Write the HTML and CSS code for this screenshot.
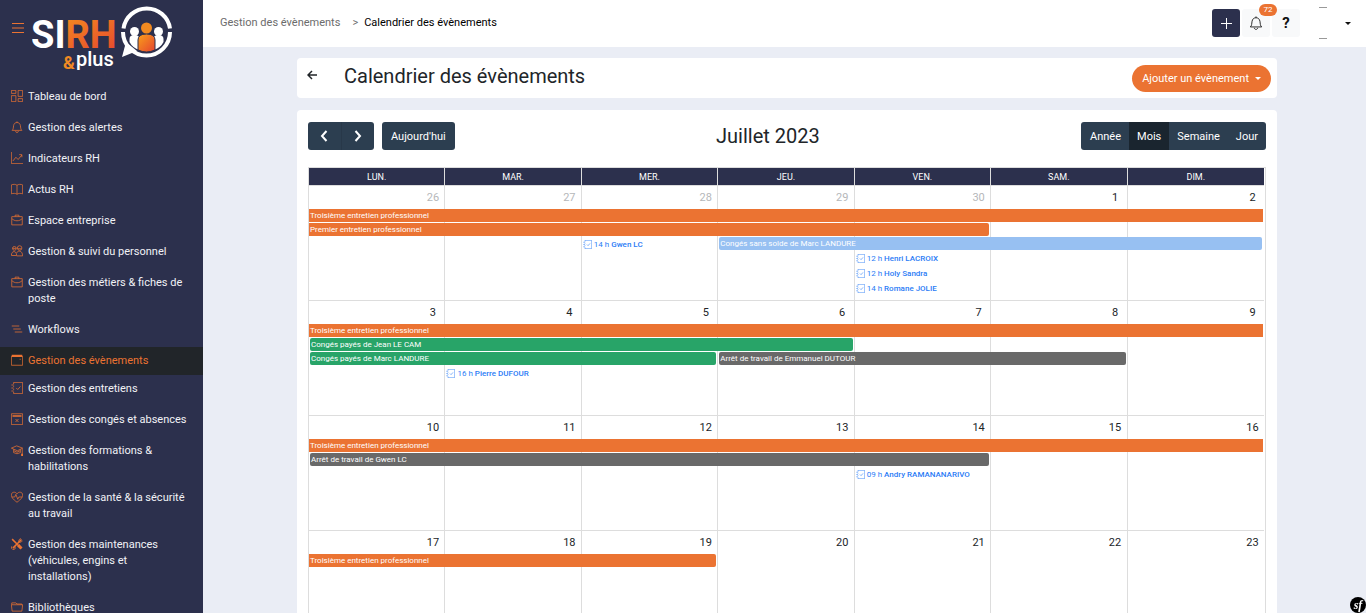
FILE: index.html
```html
<!DOCTYPE html>
<html lang="fr">
<head>
<meta charset="utf-8">
<title>Calendrier des évènements</title>
<link rel="stylesheet" href="styles.css">
</head>
<body>
<svg class="sprite" aria-hidden="true">
  <symbol id="i-entretien" viewBox="0 0 16 16"><path d="M3.500 3V.5h12v15h-12V13M3.500 5v1.500M3.500 9v1.500M.5 4h3M.5 8h3M.5 12h3M7 8l2 2 3.500-4"/></symbol>
  <symbol id="i-brief" viewBox="0 0 16 16"><path d="M5.500 3.500v-2h5v2M1 3.500h14v11H1zM1 6c2 2 4 3 7 3s5-1 7-3"/></symbol>
  <symbol id="i-bell" viewBox="0 0 16 16"><path d="M1.500 12.500h13C12.700 11 13 9 12.500 6 12 3.500 10.500 2 8 2S4 3.500 3.500 6c-.5 3-.2 5-2 6.500zM8 .5V2M6 13.500c.3 2.400 3.700 2.400 4 0"/></symbol>
</svg>
<div class="app">
  <aside class="sidebar">
    <div class="brand">
      <button class="burger" type="button" aria-label="Menu"><svg viewBox="0 0 12 10"><path d="M0 .5h12M0 5h12M0 9.500h12"/></svg></button>
      <svg class="logo" viewBox="0 0 144 72" role="img" aria-label="SIRH &amp; plus">
        <defs><linearGradient id="flame" x1="0" y1="0" x2="1" y2="1"><stop offset="0" stop-color="#f9a01b"/><stop offset="1" stop-color="#e5432f"/></linearGradient></defs>
        <text x="-1" y="44" class="logo-main">SI<tspan fill="url(#flame)">RH</tspan></text>
        <text x="31" y="65" class="logo-amp">&amp;</text>
        <text x="44" y="62" class="logo-sub">plus</text>
        <path d="M91.500 22.500a23.500 23.500 0 0 1 46.500 0M91 26a23.500 23.500 0 0 0 47 0" transform="translate(0 2)" fill="none" stroke="#fff" stroke-width="4"/>
        <path d="M94 38l-4 15 15-6z" fill="#fff"/>
        <circle cx="102.500" cy="27.500" r="4.500" fill="#fff"/><circle cx="126.500" cy="27.500" r="4.500" fill="#fff"/>
        <path d="M97.500 38V35q0-4 5-4t5 4v11q-7-2-10-8zM131.500 38V35q0-4-5-4t-5 4v11q7-2 10-8z" fill="#fff"/>
        <path d="M106 46V36q0-6 8.500-6t8.500 6v10q-8.500 4-17 0z" fill="url(#flame)" stroke="#2c304d"/>
        <circle cx="114.500" cy="24" r="5.500" fill="#f28a20"/>
      </svg>
    </div>
    <nav class="menu">
      <a href="#"><svg viewBox="0 0 16 16"><path d="M.5.5h6v4h-6zM.5 7.500h6v8h-6zM9.500.5h6v8h-6zM9.500 11.500h6v4h-6z"/></svg><span>Tableau de bord</span></a>
      <a href="#"><svg><use href="#i-bell"/></svg><span>Gestion des alertes</span></a>
      <a href="#"><svg viewBox="0 0 16 16"><path d="M.5 0v15.500H16M2.500 12l4-5 3 3 5-6M11 3.500h3.500V7"/></svg><span>Indicateurs RH</span></a>
      <a href="#"><svg viewBox="0 0 16 16"><path d="M8 3C6 1.500 3 1.500.5 2.500v12C3 13.500 6 13.500 8 15c2-1.500 5-1.500 7.500-.5v-12C13 1.500 10 1.500 8 3zM8 3v12"/></svg><span>Actus RH</span></a>
      <a href="#"><svg><use href="#i-brief"/></svg><span>Espace entreprise</span></a>
      <a href="#"><svg viewBox="0 0 16 16"><circle cx="4.500" cy="4.500" r="2.500"/><circle cx="11.500" cy="4" r="3"/><path d="M.5 14c0-7 7-7 7 0zM7.500 14.500h8c0-7-6-8-8-4M2 4.500h5M9 5h5"/></svg><span>Gestion &amp; suivi du personnel</span></a>
      <a href="#"><svg><use href="#i-brief"/></svg><span>Gestion des métiers &amp; fiches de poste</span></a>
      <a href="#"><svg viewBox="0 0 16 16"><path d="M1 4h10M3 8h10M5 12h10"/></svg><span>Workflows</span></a>
      <a href="#" class="active" aria-current="page"><svg viewBox="0 0 16 16"><path d="M.5 3h15v12H.5zM11.500 7h1.500"/><path d="M1 2.500h14" stroke-width="3"/></svg><span>Gestion des évènements</span></a>
      <a href="#"><svg><use href="#i-entretien"/></svg><span>Gestion des entretiens</span></a>
      <a href="#"><svg viewBox="0 0 16 16"><path d="M.5 1h15v14.500H.5zM6 8l4 4M10 8l-4 4"/><path d="M2 4h12" stroke-width="2"/></svg><span>Gestion des congés et absences</span></a>
      <a href="#"><svg viewBox="0 0 16 16"><path d="M.5 5.500l7-3 8 3-7 3.500zM3.500 7v4.500q4.500 3 9 0V7M15 6v8M4 9l4 2 4-2"/><path d="M13.500 14.500h2.500" stroke-width="3"/></svg><span>Gestion des formations &amp; habilitations</span></a>
      <a href="#"><svg viewBox="0 0 16 16"><path d="M8 15C2 10.500.5 8 .5 5.200.5 1 6 .5 8 3.700 10 .5 15.500 1 15.500 5.200 15.500 8 14 10.500 8 15zM1 8h4l1.500-3.500L9 11l1.500-3H15"/></svg><span>Gestion de la santé &amp; la sécurité au travail</span></a>
      <a href="#"><svg viewBox="0 0 16 16"><path d="M1.500 1.500L9 9l4.500 5M14 2L2.500 13.500" stroke-width="2"/><path d="M9.500 9.500l4.500 4.500" stroke-width="4"/><path d="M13 .5l-2.500 2v3h3l2-2M1 11l-.5 2.500 2 2 3-1v-3"/></svg><span>Gestion des maintenances (véhicules, engins et installations)</span></a>
      <a href="#"><svg viewBox="0 0 16 16"><path d="M1.500 13.500L.5 5h15l-1 8.500zM1 5V2.500h5.500L8 4h6.500v1"/></svg><span>Bibliothèques</span></a>
    </nav>
  </aside>

  <div class="content">
    <header class="topbar">
      <nav class="crumbs" aria-label="Fil d'Ariane"><a href="#">Gestion des évènements</a><span class="sep">&gt;</span><span class="here">Calendrier des évènements</span></nav>
      <div class="tools">
        <button class="tool tool-add" type="button" aria-label="Ajouter"><svg viewBox="0 0 11 11"><path d="M5.500 0v11M0 5.500h11"/></svg></button>
        <button class="tool tool-bell" type="button" aria-label="Notifications"><svg class="bell"><use href="#i-bell"/></svg><span class="badge">72</span></button>
        <button class="tool tool-help" type="button">?</button>
        <button class="account" type="button" aria-label="Compte"><svg class="avatar" viewBox="0 0 32 32"><path d="M12 .5h8M12 31.500h8"/></svg><span class="caret"></span></button>
      </div>
    </header>

    <main class="page">
      <section class="card heading">
        <a class="back" href="#" aria-label="Retour"><svg viewBox="0 0 10 10"><path d="M10 5H1M5 1L1 5l4 4"/></svg></a>
        <h1>Calendrier des évènements</h1>
        <button class="add-event" type="button">Ajouter un évènement<span class="caret"></span></button>
      </section>

      <section class="card calendar">
        <div class="toolbar">
          <div class="left">
            <div class="group arrows">
              <button type="button" aria-label="Mois précédent"><svg viewBox="0 0 8 12"><path d="M6.500 1L2 6l4.500 5"/></svg></button>
              <button type="button" aria-label="Mois suivant"><svg viewBox="0 0 8 12"><path d="M1.500 1L6 6l-4.500 5"/></svg></button>
            </div>
            <div class="group"><button type="button">Aujourd'hui</button></div>
          </div>
          <h2>Juillet 2023</h2>
          <div class="group views">
            <button type="button">Année</button><button type="button" class="on" aria-pressed="true">Mois</button><button type="button">Semaine</button><button type="button">Jour</button>
          </div>
        </div>

        <div class="frame">
        <table class="month">
          <thead><tr><th>LUN.</th><th>MAR.</th><th>MER.</th><th>JEU.</th><th>VEN.</th><th>SAM.</th><th>DIM.</th></tr></thead>
          <tbody>
            <tr>
              <td class="out"><div class="num">26</div>
                <div class="bar orange span-7">Troisième entretien professionnel</div>
                <div class="bar orange span-5 ends">Premier entretien professionnel</div></td>
              <td class="out"><div class="num">27</div></td>
              <td class="out"><div class="num">28</div><div class="skip-2"><a class="timed" href="#"><svg><use href="#i-entretien"/></svg>14 h <b>Gwen LC</b></a></div></td>
              <td class="out"><div class="num">29</div><div class="skip-2"><div class="bar blue span-4 starts ends">Congés sans solde de Marc LANDURE</div></div></td>
              <td class="out"><div class="num">30</div><div class="skip-3">
                <a class="timed" href="#"><svg><use href="#i-entretien"/></svg>12 h <b>Henri LACROIX</b></a>
                <a class="timed" href="#"><svg><use href="#i-entretien"/></svg>12 h <b>Holy Sandra</b></a>
                <a class="timed" href="#"><svg><use href="#i-entretien"/></svg>14 h <b>Romane JOLIE</b></a></div></td>
              <td><div class="num">1</div></td>
              <td><div class="num">2</div></td>
            </tr>
            <tr>
              <td><div class="num">3</div>
                <div class="bar orange span-7">Troisième entretien professionnel</div>
                <div class="bar green span-4 starts ends">Congés payés de Jean LE CAM</div>
                <div class="bar green span-3 starts ends">Congés payés de Marc LANDURE</div></td>
              <td><div class="num">4</div><div class="skip-3"><a class="timed" href="#"><svg><use href="#i-entretien"/></svg>16 h <b>Pierre DUFOUR</b></a></div></td>
              <td><div class="num">5</div></td>
              <td><div class="num">6</div><div class="skip-2"><div class="bar grey span-3 starts ends">Arrêt de travail de Emmanuel DUTOUR</div></div></td>
              <td><div class="num">7</div></td>
              <td><div class="num">8</div></td>
              <td><div class="num">9</div></td>
            </tr>
            <tr>
              <td><div class="num">10</div>
                <div class="bar orange span-7">Troisième entretien professionnel</div>
                <div class="bar grey span-5 starts ends">Arrêt de travail de Gwen LC</div></td>
              <td><div class="num">11</div></td>
              <td><div class="num">12</div></td>
              <td><div class="num">13</div></td>
              <td><div class="num">14</div><div class="skip-2"><a class="timed" href="#"><svg><use href="#i-entretien"/></svg>09 h <b>Andry RAMANANARIVO</b></a></div></td>
              <td><div class="num">15</div></td>
              <td><div class="num">16</div></td>
            </tr>
            <tr>
              <td><div class="num">17</div><div class="bar orange span-3 ends">Troisième entretien professionnel</div></td>
              <td><div class="num">18</div></td>
              <td><div class="num">19</div></td>
              <td><div class="num">20</div></td>
              <td><div class="num">21</div></td>
              <td><div class="num">22</div></td>
              <td><div class="num">23</div></td>
            </tr>
          </tbody>
        </table>
        </div>
      </section>
    </main>
  </div>
</div>
<button class="sf" type="button" aria-label="Symfony">sf</button>
</body>
</html>
```

FILE: styles.css
```css
* { box-sizing: border-box; }
body { margin: 0; font-family: Roboto, "Liberation Sans", sans-serif; font-size: 11px; color: #212529; background: #eaedf5; }
button { font: inherit; border: 0; padding: 0; cursor: pointer; }
a { text-decoration: none; color: inherit; }
svg { display: block; fill: none; stroke: currentColor; }
.sprite { width: 0; height: 0; float: left; }
.app { display: grid; grid-template-columns: 203px minmax(0, 1fr); height: 100vh; overflow: hidden; }

.sidebar { background: #2c304d; color: #f1f2f6; overflow: hidden; }
.brand { display: flex; height: 83px; padding: 4px 0 0 12px; gap: 8px; }
.burger { width: 12px; height: 48px; background: none; color: #eb7332; }
.burger svg { width: 12px; height: 10px; }
.logo { width: 144px; height: 72px; stroke: none; }
.logo-main { font: 700 38px Roboto, sans-serif; fill: #fff; }
.logo-amp { font: 700 18px Roboto, sans-serif; fill: #f08a24; }
.logo-sub { font: 500 20px Roboto, sans-serif; fill: #fff; }

.menu a { display: flex; gap: 5px; padding: 6px 12px 6px 11px; line-height: 16px; }
.menu a + a { margin-top: 3px; }
.menu .active + a { margin-top: 0; }
.menu svg { flex: none; width: 12px; height: 12px; margin-top: 1px; color: #eb7332; }
.menu .active { background: #212529; color: #eb7332; }

.topbar { display: flex; justify-content: space-between; height: 47px; padding: 0 15px 0 17px; background: #fff; }
.crumbs { display: flex; align-items: center; padding-bottom: 3px; color: #6c6c6c; }
.sep { margin: 0 6px 0 12px; }
.here { color: #000; }
.tools { display: flex; gap: 2px; padding-top: 9px; }
.tool { display: grid; place-items: center; width: 28px; height: 28px; border-radius: 3px; background: #f8f9fa; color: #111; }
.tool-add { background: #2c304d; color: #fff; }
.tool-add svg { width: 11px; height: 11px; }
.tool-bell { position: relative; z-index: 1; }
.bell { width: 14px; height: 14px; }
.tool-help { font-size: 15px; font-weight: 700; }
.badge { position: absolute; top: -5px; right: -7px; width: 18px; border-radius: 6px; background: #eb7332; color: #fff; font-size: 8px; line-height: 12px; text-align: center; }
.account { display: flex; align-items: center; gap: 6px; height: 32px; margin: -2px 0 0 5px; background: none; color: #111; }
.avatar { width: 32px; height: 32px; stroke: #999; }
.caret { border: 3px solid transparent; border-top-color: currentColor; border-bottom: 0; }

.page { padding: 11px 89px 0 94px; }
.card { background: #fff; border-radius: 4px; }
.heading { display: flex; align-items: center; height: 40px; padding: 0 6px 0 10px; margin-bottom: 12px; }
.back svg { width: 10px; height: 10px; margin-bottom: 6px; stroke-width: 1.5; }
h1, h2 { margin: 0; font-size: 20px; font-weight: 400; line-height: 24px; }
h1 { flex: 1; margin: 0 0 4px 27px; }
.add-event { display: flex; align-items: center; gap: 6px; height: 27px; padding: 0 10px; border-radius: 14px; background: #eb7332; color: #fff; }

.calendar { padding: 11px; }
.toolbar { display: flex; justify-content: space-between; align-items: center; height: 29px; margin-bottom: 17px; }
.left { display: flex; gap: 8px; }
.group { display: flex; border-radius: 3px; overflow: hidden; }
.group button { height: 28px; padding: 1px 9px 0; background: #2c3e50; color: #fff; }
.group .on { background: #1a252f; }
.views button { padding: 1px 8px 0; }
.views button:first-child { padding-left: 9px; }
.arrows button { width: 33px; padding: 0 12px; }
.arrows button + button { border-left: 1px solid #283849; }
.arrows svg { width: 8px; height: 12px; stroke-width: 2; }

.frame { border: 1px solid #ddd; padding-right: 1px; }
.month { width: 100%; table-layout: fixed; border-spacing: 0; }
.month th { height: 18px; padding: 0; background: #2c304d; background-clip: padding-box; color: #fff; font-size: 9px; font-weight: 400; }
.month th, .month td { border: 0 solid #ddd; border-width: 0 1px 1px 0; }
.month th:last-child, .month td:last-child { border-right: 0; }
.month td { height: 115px; padding: 0; vertical-align: top; }
.num { width: 13px; height: 23px; margin: 0 5px 0 auto; padding-top: 4px; text-align: center; line-height: 16px; }
.out .num { color: #b5b7ba; }
.skip-2 { padding-top: 28px; }
.skip-3 { padding-top: 42px; }
.bar { position: relative; z-index: 1; width: calc(var(--span) * 100% + var(--span) * 1px - 1px - var(--inset, 0px)); height: 13px; margin-bottom: 1px; padding-left: 1px; font-size: 8px; line-height: 14px; color: #fff; white-space: nowrap; }
.span-3 { --span: 3; }
.span-4 { --span: 4; }
.span-5 { --span: 5; }
.span-7 { --span: 7; }
.ends { --inset: 1px; border-radius: 0 2px 2px 0; }
.starts { --inset: 2px; margin-left: 1px; border-radius: 2px; }
.orange { background: #eb7332; }
.green { background: #28a468; }
.blue { background: #97c0f2; }
.grey { background: #696969; }
.timed { display: flex; align-items: center; gap: 2px; height: 15px; padding-left: 1px; font-size: 8px; color: #2b7cf6; white-space: nowrap; }
.timed svg { width: 9px; height: 9px; }
.timed b { font-weight: 500; }

.sf { position: fixed; right: 0; bottom: 0; width: 16px; height: 16px; border-radius: 50%; background: #000; color: #fff; font: italic 700 12px "Liberation Serif", serif; }
```
